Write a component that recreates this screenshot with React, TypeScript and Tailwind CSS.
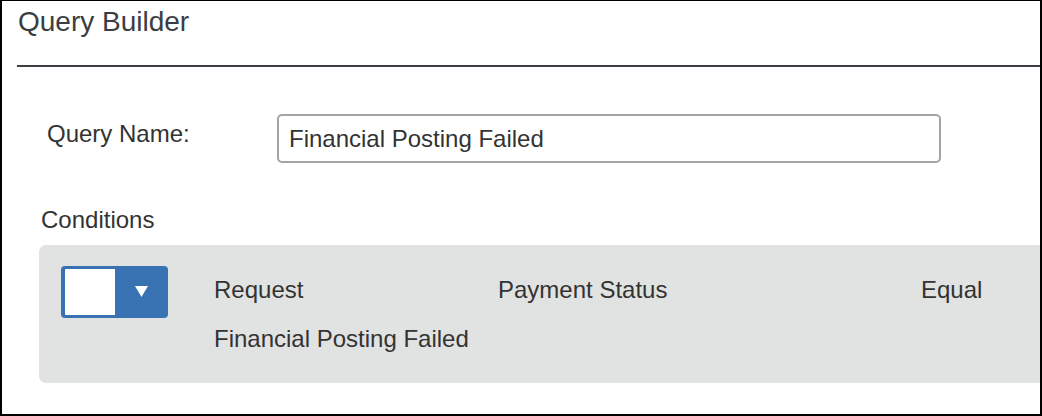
import React from 'react';

const font = { fontFamily: '"Liberation Sans", Arial, sans-serif' };

function ConditionSelect() {
  return (
    <div className="mt-[1px] flex h-[52px] w-[107px] shrink-0 rounded-[4px] bg-[#3872b2] py-[3px] pl-[4px]">
      <div className="h-full w-[50px] rounded-l-[1px] bg-white" />
      <div className="flex flex-1 items-center justify-center pb-[1px]">
        <svg width="13" height="11" viewBox="0 0 13 11">
          <polygon points="0,0 13,0 6.5,11" fill="#ffffff" />
        </svg>
      </div>
    </div>
  );
}

export default function App() {
  return (
    <div
      className="h-[416px] w-[1042px] overflow-hidden border-2 border-t border-black bg-white text-[#333333]"
      style={font}
    >
      {/* Header */}
      <div className="pl-[16px] pt-[4px] text-[28px] leading-[34px] text-[#3a3d41]">Query Builder</div>
      <div className="ml-[15px] mt-[26px] h-[2px] bg-[#3c4044]" />

      {/* Query name row */}
      <div className="mt-[47px] flex items-start pl-[45px]">
        <label className="w-[230px] shrink-0 text-[24px] leading-[39px]">Query Name:</label>
        <input
          readOnly
          value="Financial Posting Failed"
          className="h-[49px] w-[664px] rounded-[5px] border-2 border-[#a4a4a8] bg-white pl-[10px] text-[24px] text-[#333333] outline-none"
          style={font}
        />
      </div>

      {/* Conditions */}
      <div className="ml-[39px] mt-[43px] text-[24px] leading-[28px]">Conditions</div>
      <div className="ml-[37px] mt-[11px] flex w-[1100px] rounded-[7px] bg-[#e1e2e2] pb-[20px] pl-[22px] pt-[20px]">
        <ConditionSelect />
        <div className="ml-[46px] flex w-[900px] flex-wrap text-[24px] leading-[49px]">
          <span className="w-[284px]">Request</span>
          <span className="w-[423px]">Payment Status</span>
          <span className="w-[193px]">Equal</span>
          <span className="w-[400px]">Financial Posting Failed</span>
        </div>
      </div>
    </div>
  );
}
